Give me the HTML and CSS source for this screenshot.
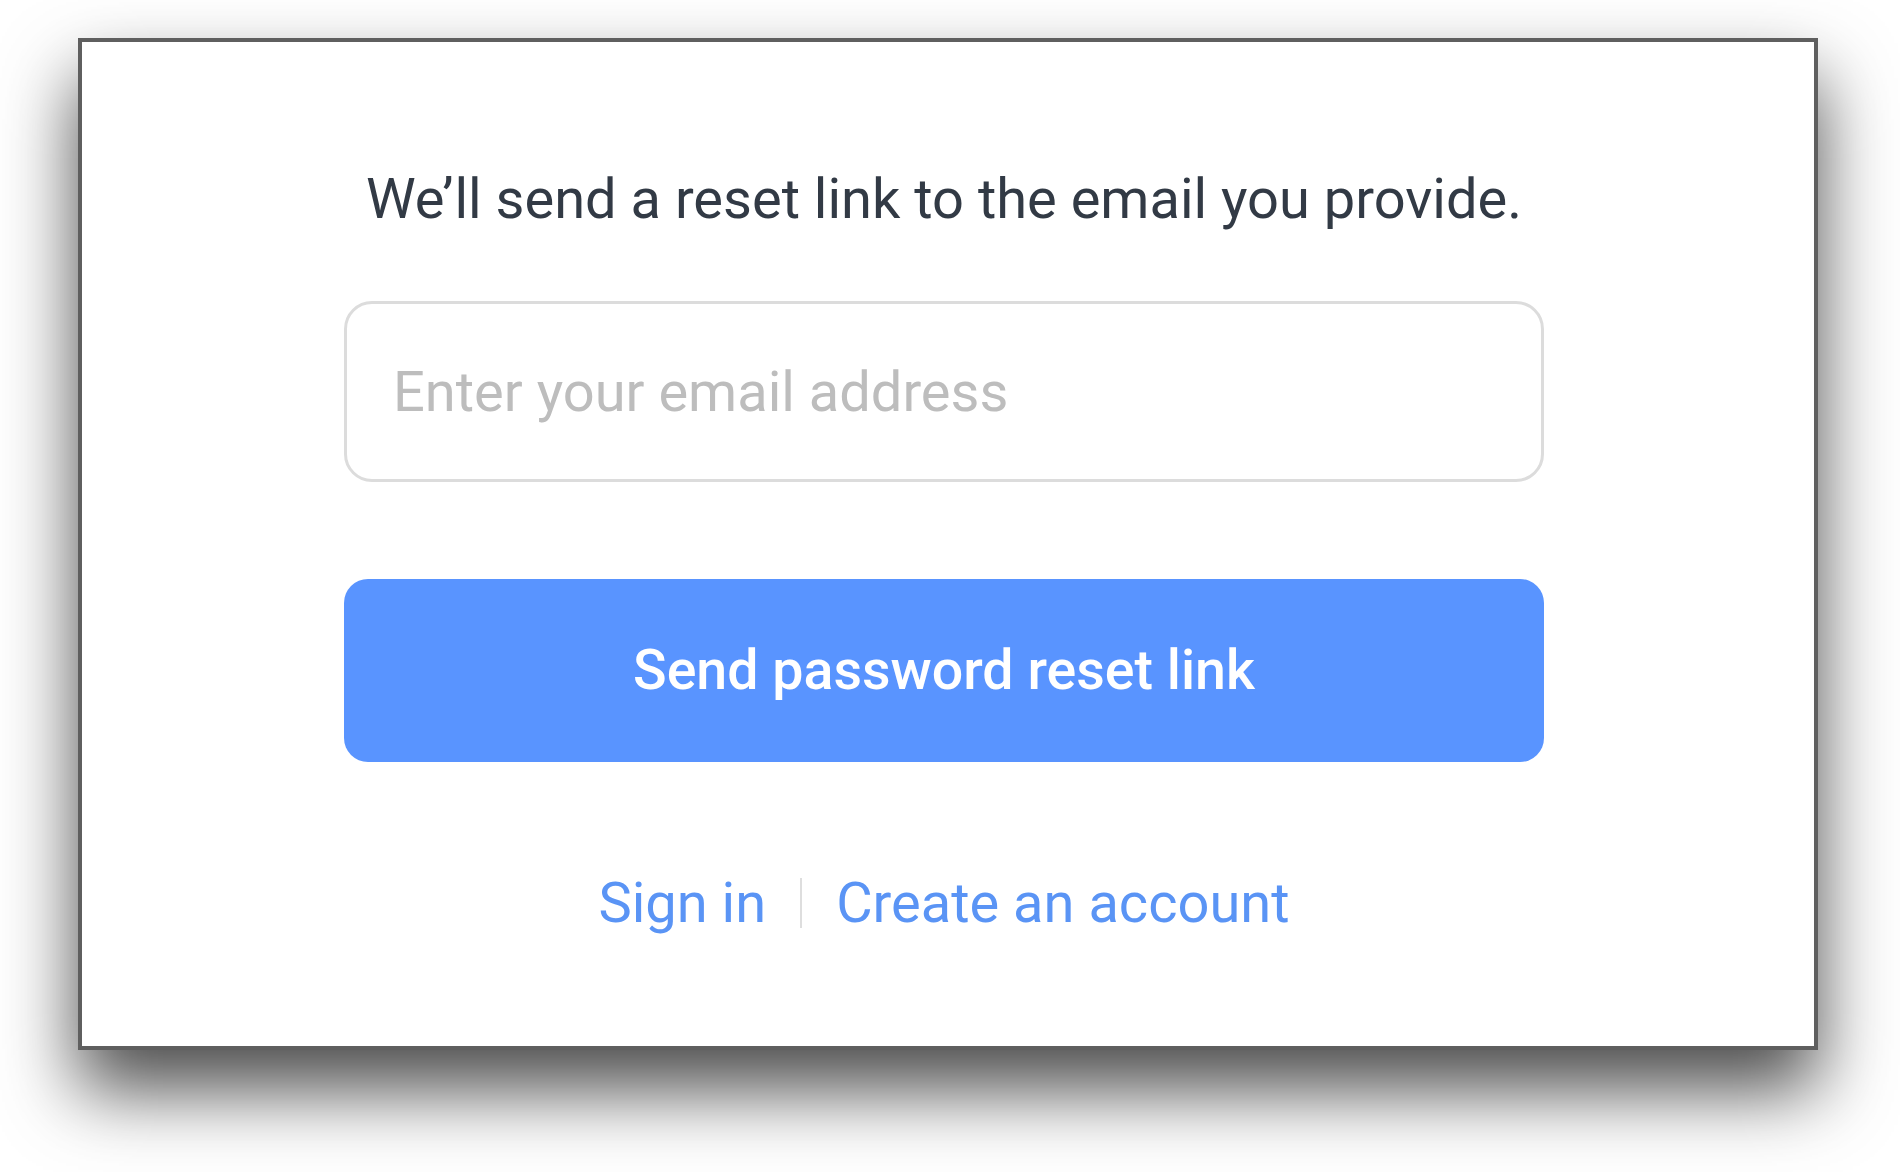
FILE: index.html
```html
<!DOCTYPE html>
<html lang="en">
<head>
  <meta charset="UTF-8">
  <meta name="viewport" content="width=device-width, initial-scale=1.0">
  <title>Reset password</title>
  <link rel="stylesheet" href="styles.css">
</head>
<body>
  <div class="reset-card">
    <p class="reset-text">We’ll send a reset link to the email you provide.</p>
    <form class="reset-form">
      <input class="email-input" type="email" placeholder="Enter your email address">
      <button class="submit-btn" type="button">Send password reset link</button>
    </form>
    <div class="links">
      <a href="#">Sign in</a>
      <span class="divider"></span>
      <a href="#">Create an account</a>
    </div>
  </div>
</body>
</html>
```

FILE: styles.css
```css
html, body {
  height: 100%;
}
body {
  box-sizing: border-box;
  font-family: Roboto, "Liberation Sans", sans-serif;
  background: #fff;
  margin: 0;
  padding: 38px 0 0 78px;
  min-height: 1172px;
}
.reset-card {
  box-sizing: border-box;
  width: 1740px;
  height: 1012px;
  background: white;
  border: 4px solid #5f5f5f;
  box-shadow: 0 40px 70px rgba(0,0,0,0.7);
  display: flex;
  flex-direction: column;
  align-items: center;
  padding: 123px 8px 0 0;
}
.reset-text {
  margin: 0;
  font-size: 56px;
  line-height: 68px;
  color: #323a45;
}
.reset-form {
  display: flex;
  flex-direction: column;
  width: 1200px;
  margin-top: 68px;
}
.email-input {
  box-sizing: border-box;
  height: 181px;
  padding: 0 46px;
  font-family: inherit;
  font-size: 56px;
  color: #323a45;
  border: 3px solid #dcdcdc;
  border-radius: 28px;
  outline: none;
}
.email-input::placeholder {
  color: #bdbdbd;
}
.submit-btn {
  margin-top: 97px;
  height: 183px;
  font-family: inherit;
  font-size: 55.5px;
  font-weight: 500;
  background-color: #5994ff;
  color: white;
  border: none;
  border-radius: 24px;
  cursor: pointer;
}
.links {
  display: flex;
  align-items: center;
  margin-top: 107px;
  font-size: 56px;
  line-height: 68px;
}
.links a {
  color: #5a94f5;
  text-decoration: none;
}
.divider {
  width: 2px;
  height: 50px;
  margin: 0 34px;
  background: #dedede;
}
```
